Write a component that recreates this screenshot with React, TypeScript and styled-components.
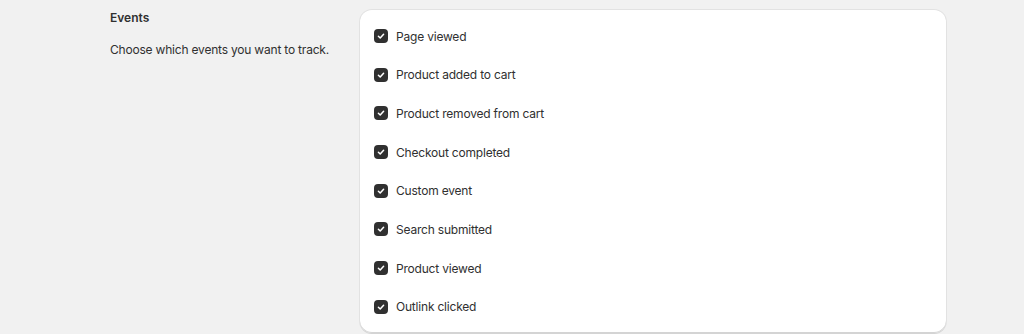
import React from "react";
import styled, { createGlobalStyle } from "styled-components";

const GlobalStyle = createGlobalStyle`
  html, body {
    margin: 0;
    padding: 0;
    background: #f1f1f1;
    font-family: Inter, "Noto Sans", sans-serif;
    color: #303030;
    -webkit-font-smoothing: antialiased;
  }
`;

const events = [
  "Page viewed",
  "Product added to cart",
  "Product removed from cart",
  "Checkout completed",
  "Custom event",
  "Search submitted",
  "Product viewed",
  "Outlink clicked",
];

const Page = styled.div`
  display: grid;
  grid-template-columns: 250px 586px;
  padding: 10px 0 0 110px;
  height: 334px;
  box-sizing: border-box;
`;

const Aside = styled.div`
  display: flex;
  flex-direction: column;
  gap: 16px;
`;

const Title = styled.h2`
  margin: 0;
  font-size: 12px;
  line-height: 16px;
  font-weight: 600;
`;

const Description = styled.p`
  margin: 0;
  font-size: 12px;
  line-height: 16px;
  font-weight: 400;
  letter-spacing: -0.2px;
`;

const Card = styled.div`
  background: #fff;
  border-radius: 12px;
  box-shadow: 0 1px 0 0 rgba(26, 26, 26, 0.07), 0 0 0 1px rgba(0, 0, 0, 0.06),
    inset 0 -1px 0 0 #d4d4d4;
  padding: 16px 14px;
  display: flex;
  flex-direction: column;
  gap: 18.7px;
  height: 323px;
  box-sizing: border-box;
`;

const Row = styled.label`
  display: flex;
  align-items: center;
  gap: 8px;
  height: 20px;
  font-size: 12px;
  font-weight: 400;
  letter-spacing: -0.2px;
  cursor: pointer;
`;

const Box = styled.span<{ $checked: boolean }>`
  width: 14px;
  height: 14px;
  border-radius: 4px;
  background: ${(p) => (p.$checked ? "#303030" : "#fff")};
  border: ${(p) => (p.$checked ? "none" : "1px solid #8a8a8a")};
  display: flex;
  align-items: center;
  justify-content: center;
  flex-shrink: 0;
`;

const Check = () => (
  <svg width="10" height="10" viewBox="0 0 10 10" fill="none">
    <path
      d="M2.4 5.2 L4.2 7 L7.6 3.2"
      stroke="#fff"
      strokeWidth="1.5"
      strokeLinecap="round"
      strokeLinejoin="round"
    />
  </svg>
);

export default function App() {
  return (
    <>
      <GlobalStyle />
      <Page>
        <Aside>
          <Title>Events</Title>
          <Description>Choose which events you want to track.</Description>
        </Aside>
        <Card>
          {events.map((e) => (
            <Row key={e}>
              <Box $checked>
                <Check />
              </Box>
              {e}
            </Row>
          ))}
        </Card>
      </Page>
    </>
  );
}
